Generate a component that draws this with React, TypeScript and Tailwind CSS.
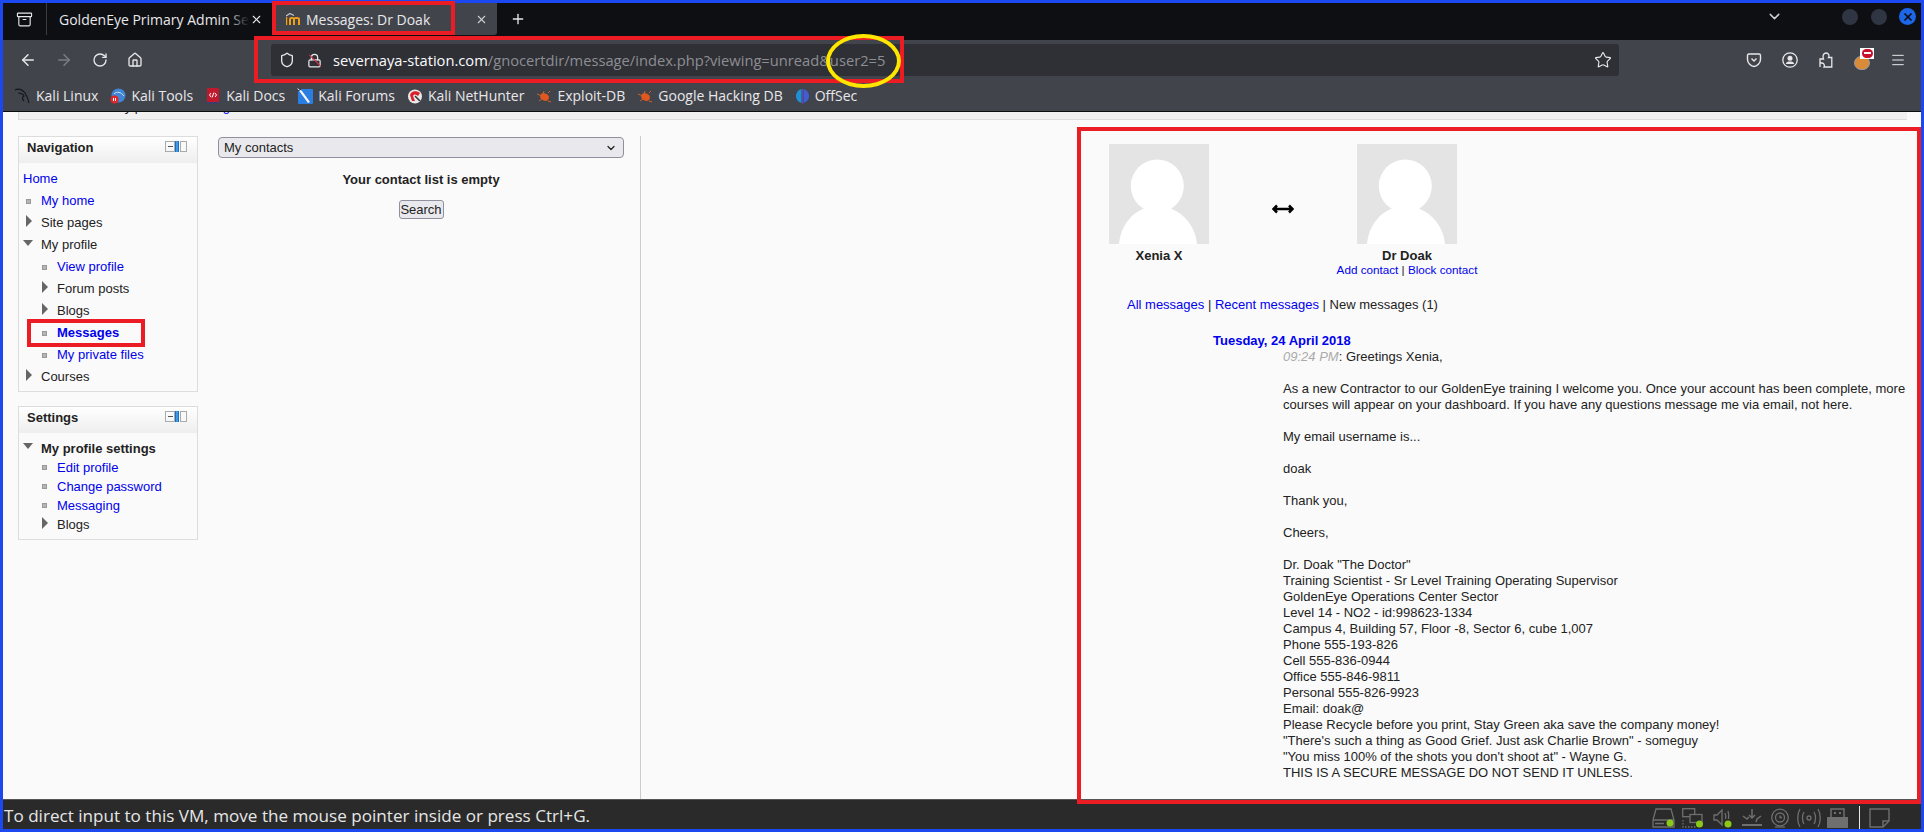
import type { ReactNode } from 'react';
import { ArrowLeft, ArrowRight, RotateCw, Home, Shield, Lock, Star, Plus, X, ChevronDown, Menu, Archive } from 'lucide-react';

const signature = [
    'Dr. Doak "The Doctor"',
    'Training Scientist - Sr Level Training Operating Supervisor',
    'GoldenEye Operations Center Sector',
    'Level 14 - NO2 - id:998623-1334',
    'Campus 4, Building 57, Floor -8, Sector 6, cube 1,007',
    'Phone 555-193-826',
    'Cell 555-836-0944',
    'Office 555-846-9811',
    'Personal 555-826-9923',
    'Email: doak@',
    'Please Recycle before you print, Stay Green aka save the company money!',
    '"There\'s such a thing as Good Grief. Just ask Charlie Brown" - someguy',
    '"You miss 100% of the shots you don\'t shoot at" - Wayne G.',
    'THIS IS A SECURE MESSAGE DO NOT SEND IT UNLESS.',
];

function BugIcon() {
    return (
        <svg width="16" height="16" viewBox="0 0 16 16">
            <ellipse cx="8.500" cy="9" rx="4.500" ry="3.500" fill="#e2571e" transform="rotate(25 8.500 9)" />
            <path d="M1 6L6 8M3 13L6 11M12 5L14 3M12 13L15 14M8 3L7 6" stroke="#c8642a" strokeWidth="1" />
        </svg>
    );
}

const bookmarks: { name: string; icon: ReactNode }[] = [
    {
        name: 'Kali Linux',
        icon: (
            <svg width="16" height="16" viewBox="0 0 16 16" fill="none" stroke="#15161a" strokeWidth="1.200">
                <path d="M0 2C4 0 8 2 10 5C12 8 13 10 14 15" />
                <path d="M3 5C6 5 8 6 9 8C7 9 7 11 9 13" />
            </svg>
        ),
    },
    {
        name: 'Kali Tools',
        icon: (
            <svg width="16" height="16" viewBox="0 0 16 16">
                <circle cx="8.500" cy="7.500" r="7" fill="#3f87d6" />
                <path d="M4 6C7 3 11 4 14 8" stroke="#cfe2f5" strokeWidth="1" fill="none" />
                <circle cx="4.500" cy="11.500" r="4" fill="#e0262b" />
                <path d="M3.500 10V13M5.500 10V13" stroke="#fff" strokeWidth="1" />
            </svg>
        ),
    },
    {
        name: 'Kali Docs',
        icon: (
            <svg width="16" height="16" viewBox="0 0 16 16">
                <rect x="2" y="0" width="12" height="16" rx="1" fill="#c2182b" />
                <rect x="2" y="14" width="12" height="2" fill="#3a3f6b" />
                <path d="M6 5L4.500 7L6 9M10 5L11.500 7L10 9M7 9.500L9 4.500" stroke="#fff" strokeWidth="1" fill="none" />
            </svg>
        ),
    },
    {
        name: 'Kali Forums',
        icon: (
            <svg width="16" height="16" viewBox="0 0 16 16">
                <rect x="1" y="1" width="15" height="15" rx="1" fill="#2a7de1" />
                <path d="M0 0L11 15L13 14L5 3Z" fill="#f4f4f4" />
                <path d="M1 3L4 1" stroke="#222" strokeWidth="1" />
            </svg>
        ),
    },
    {
        name: 'Kali NetHunter',
        icon: (
            <svg width="16" height="16" viewBox="0 0 16 16">
                <circle cx="8" cy="8.500" r="7" fill="#e8e8e8" />
                <path d="M3 7C4 3 9 2 13 5L11 8C9 6 7 6 6 8L8 13L5 13Z" fill="#d81f2a" />
                <path d="M8 8L13 13" stroke="#333" strokeWidth="1.500" />
            </svg>
        ),
    },
    { name: 'Exploit-DB', icon: <BugIcon /> },
    { name: 'Google Hacking DB', icon: <BugIcon /> },
    {
        name: 'OffSec',
        icon: (
            <svg width="15" height="16" viewBox="0 0 15 16">
                <path d="M6.500 1C3 2 1 5 1 8C1 11 3 14 6.500 15Z" fill="#1f8fd6" />
                <path d="M8.500 1C12 2 14 5 14 8C14 11 12 14 8.500 15Z" fill="#3f5fd0" />
                <rect x="7" y="1" width="1" height="15" fill="#6d3fc0" />
            </svg>
        ),
    },
];

function MoodleIcon() {
    return (
        <svg width="14" height="12" viewBox="0 0 14 12" fill="none" className="mr-[6px]">
            <path d="M4 12V6C4 4.500 8 4.500 8 6V12M8 6C8 4.500 13 4.500 13 6V12" stroke="#f29f18" strokeWidth="2" />
            <path d="M0.500 12V4" stroke="#f29f18" strokeWidth="1.500" />
            <path d="M0 3L4 0.500L8 2.500" stroke="#c8c8c8" strokeWidth="1.200" />
        </svg>
    );
}

function Avatar() {
    return (
        <svg width="100" height="100" viewBox="0 0 100 100" className="block">
            <rect width="100" height="100" fill="#e4e4e4" />
            <circle cx="48.300" cy="42" r="26.500" fill="#fff" />
            <path d="M10 100C12 78 28 62 48.300 62C68 62 86 78 88 100Z" fill="#fff" />
        </svg>
    );
}

function BlockControls() {
    return (
        <div className="flex items-stretch h-[11px] mt-[1px]">
            <span className="w-[10px] border border-[#aaa] flex items-center justify-center">
                <span className="w-[5px] h-px bg-[#555]" />
            </span>
            <span className="w-[4px] bg-[#3b9be8] border-x border-[#1d6fc0]" />
            <span className="w-[7px] ml-px border border-[#aaa] bg-[#f8f8f8]" />
        </div>
    );
}

function Block({ title, children, className }: { title: string; children: ReactNode; className?: string }) {
    return (
        <div className={`w-[180px] border border-[#ddd] ${className ?? ''}`}>
            <div className="h-[26px] pl-[8px] pr-[10px] pt-[3px] flex items-start justify-between bg-gradient-to-b from-white to-[#eeeeee] font-bold text-[13px] leading-[16px] text-[#222]">
                {title}
                <BlockControls />
            </div>
            {children}
        </div>
    );
}

function NavLeaf({ label, bold, compact }: { label: string; bold?: boolean; compact?: boolean }) {
    return (
        <div className={`flex items-center ${compact ? 'h-[19px]' : 'h-[22px]'}`}>
            <span className="w-[5px] h-[5px] bg-[#b5b5b5] border border-[#999] ml-[3px] mr-[10px]" />
            <a className={`text-[#0000ee] text-[13px] ${bold ? 'font-bold' : ''}`}>{label}</a>
        </div>
    );
}

function NavBranch({ label, open, bold, compact }: { label: string; open?: boolean; bold?: boolean; compact?: boolean }) {
    return (
        <div className={`flex items-center text-[13px] text-[#222] ${compact ? 'h-[19px]' : 'h-[22px]'} ${bold ? 'font-bold' : ''}`}>
            {open ? (
                <span className="w-[18px] -mt-[5px]">
                    <span className="block w-0 h-0 border-x-[5px] border-x-transparent border-t-[6px] border-t-[#666]" />
                </span>
            ) : (
                <span className="w-[18px] pl-[3px] -mt-[4px]">
                    <span className="block w-0 h-0 border-y-[6px] border-y-transparent border-l-[6px] border-l-[#666]" />
                </span>
            )}
            {label}
        </div>
    );
}

function StatusIcons() {
    return (
        <div className="flex items-center pr-[31px] pt-[3px] text-[#6f6f6f]">
            <svg width="23" height="20" viewBox="0 0 23 20" fill="none" stroke="currentColor" strokeWidth="1.300">
                <path d="M4 1H19L22 12V19H1V12Z" />
                <path d="M1 12H22M3 15.500H12" />
                <circle cx="18" cy="15" r="3.500" fill="#8bc919" stroke="none" />
            </svg>
            <svg width="21" height="20" viewBox="0 0 21 20" fill="none" stroke="currentColor" strokeWidth="1.300" className="ml-[7px]">
                <rect x="0.700" y="0.700" width="12" height="8" />
                <rect x="8" y="6.500" width="12" height="8" fill="#2a2a2a" />
                <path d="M1 12V19H14" strokeDasharray="1.500 1.500" />
                <circle cx="17.500" cy="16" r="3.500" fill="#8bc919" stroke="none" />
            </svg>
            <svg width="19" height="20" viewBox="0 0 19 20" fill="none" stroke="currentColor" strokeWidth="1.300" className="ml-[10px]">
                <path d="M1 7H4L9 2V17L4 12H1Z" />
                <path d="M12 5C13 7 13 9 12.500 11M15 3C16 6 16 8 15.500 11" />
                <circle cx="15" cy="16" r="3.500" fill="#8bc919" stroke="none" />
            </svg>
            <svg width="20" height="20" viewBox="0 0 20 20" fill="none" stroke="currentColor" strokeWidth="1.500" className="ml-[10px]">
                <path d="M10 1V10M7 7L10 10L13 7M1 8L5 11L7 9M19 8L15 11L14 14" />
                <path d="M0 17H20" strokeWidth="2" />
            </svg>
            <svg width="18" height="20" viewBox="0 0 18 20" fill="none" stroke="currentColor" strokeWidth="1.300" className="ml-[9px]">
                <circle cx="9" cy="9.500" r="8.300" />
                <circle cx="9" cy="9.500" r="4.500" />
                <path d="M9 7.500V9.500H11" />
                <path d="M4 19H14" />
            </svg>
            <svg width="24" height="20" viewBox="0 0 24 20" fill="none" stroke="currentColor" strokeWidth="1.300" className="ml-[8px]">
                <circle cx="12" cy="10" r="2" />
                <path d="M7 4C5 7 5 13 7 16M17 4C19 7 19 13 17 16M3 1C0 6 0 14 3 19M21 1C24 6 24 14 21 19" />
            </svg>
            <svg width="21" height="20" viewBox="0 0 21 20" className="ml-[6px]" fill="currentColor">
                <rect x="0" y="9" width="21" height="11" />
                <path d="M4 9V1H17V9" fill="none" stroke="currentColor" strokeWidth="1.500" />
                <rect x="7" y="4" width="2" height="2" />
                <rect x="12" y="4" width="2" height="2" />
            </svg>
            <span className="w-px h-[23px] bg-[#e8e8e8] ml-[11px]" />
            <svg width="21" height="20" viewBox="0 0 21 20" fill="none" stroke="currentColor" strokeWidth="1.400" className="ml-[9px]">
                <path d="M1 1H20V13L14 19H1Z" />
                <path d="M20 13H14V19" />
            </svg>
        </div>
    );
}

export default function App() {
    return (
        <div className="relative w-[1924px] h-[832px] flex flex-col border-[3px] border-[#1c48f0] font-['Liberation_Sans',sans-serif] bg-[#fafafa]">
            {/* tab strip */}
            <div className="h-[37px] shrink-0 bg-[#0d0f13] flex items-start text-[#e8e8ea] text-[14px] font-['Open_Sans',sans-serif]">
                <div className="w-[44px] h-[32px] flex items-center justify-center border-r border-[#3a3c42]">
                    <Archive size={17} strokeWidth={1.600} />
                </div>
                <div className="w-[228px] h-[32px] flex items-center pl-[12px] relative">
                    <span className="relative whitespace-nowrap">
                        GoldenEye Primary Admin Se
                        <span className="absolute right-0 top-0 bottom-0 w-[22px] bg-gradient-to-r from-transparent to-[#0d0f13]" />
                    </span>
                    <X size={13} className="absolute right-[12px]" />
                </div>
                <div className="w-[222px] h-[32px] rounded-b-[3px] bg-[#42444c] flex items-center pl-[11px] relative">
                    <MoodleIcon />
                    Messages: Dr Doak
                    <X size={13} className="absolute right-[9px] text-[#cfcfcf]" />
                </div>
                <div className="w-[42px] h-[32px] flex items-center justify-center">
                    <Plus size={16} />
                </div>
                <div className="flex-1 h-[27px] flex items-center justify-end pr-[5px]">
                    <ChevronDown size={17} className="text-[#d0d0d0] mr-[59px]" />
                    <span className="w-[16px] h-[16px] rounded-full bg-[#2f3542] mr-[13px]" />
                    <span className="w-[16px] h-[16px] rounded-full bg-[#2f3542] mr-[12px]" />
                    <span className="w-[17px] h-[17px] rounded-full bg-[#1e66e8] flex items-center justify-center">
                        <X size={12} strokeWidth={3.500} className="text-[#0d0f13]" />
                    </span>
                </div>
            </div>

            {/* nav toolbar */}
            <div className="h-[40px] shrink-0 bg-[#42444c] flex items-center text-[#e8e8ea]">
                <ArrowLeft size={18} className="ml-[16px]" />
                <ArrowRight size={18} className="ml-[18px] text-[#7c7d83]" />
                <RotateCw size={16} className="ml-[19px]" />
                <Home size={16} className="ml-[19px]" />
                <div className="ml-[128px] w-[1348px] h-[32px] rounded-[3px] bg-[#2f3035] flex items-center pl-[8px] relative">
                    <Shield size={16} />
                    <span className="relative ml-[12px] mr-[11px]">
                        <Lock size={15} className="block" />
                        <span className="absolute left-0 top-[7px] w-[16px] h-px bg-[#e0314b] rotate-45" />
                    </span>
                    <span className="text-[14.7px] font-['Open_Sans',sans-serif] text-[#fbfbfe]">severnaya-station.com</span>
                    <span className="text-[14.7px] font-['Open_Sans',sans-serif] text-[#8d8e93]">/gnocertdir/message/index.php?viewing=unread&amp;user2=5</span>
                    <Star size={18} strokeWidth={1.500} className="absolute right-[7px]" />
                </div>
                <svg width="16" height="16" viewBox="0 0 16 16" fill="none" stroke="currentColor" strokeWidth="1.400" className="ml-[127px]">
                    <path d="M3 2H13C14 2 14.500 2.500 14.500 3.500V7.500C14.500 11 11 14.500 8 14.500C5 14.500 1.500 11 1.500 7.500V3.500C1.500 2.500 2 2 3 2Z" />
                    <path d="M5.500 6.500L8 9L10.500 6.500" />
                </svg>
                <svg width="16" height="16" viewBox="0 0 16 16" fill="currentColor" className="ml-[20px]">
                    <circle cx="8" cy="8" r="7.200" fill="none" stroke="currentColor" strokeWidth="1.300" />
                    <circle cx="8" cy="6.300" r="2.500" />
                    <path d="M3.800 12C4 10 6 9.500 8 9.500C10 9.500 12 10 12.200 12Z" />
                </svg>
                <svg width="14" height="16" viewBox="0 0 14 16" fill="none" stroke="currentColor" strokeWidth="1.300" className="ml-[21px]">
                    <path d="M1 15V7H4.500C3.500 4.500 4 1 7 1C10 1 10.500 4 9.500 5.500H12.800V15H5C6 13.500 5 11 3 11H1" />
                </svg>
                <span className="relative ml-[21px] w-[16px] h-[14px] mt-[5px] rounded-full bg-[#d98b3a] border border-[#9a9a9a]">
                    <span className="absolute -top-[9px] left-[5px] w-[14px] h-[11px] bg-white flex items-center justify-center">
                        <span className="w-[11px] h-[9px] rounded-full bg-[#c8112b] flex items-center justify-center">
                            <span className="w-[7px] h-[2px] bg-white" />
                        </span>
                    </span>
                </span>
                <Menu size={16} strokeWidth={1.500} className="ml-[20px]" />
            </div>

            {/* bookmarks */}
            <div className="h-[32px] shrink-0 bg-[#42444c] border-b border-[#0c0c0d] flex items-center gap-[12px] pl-[12px] text-[14px] font-['Open_Sans',sans-serif] text-[#e8e8ea]">
                {bookmarks.map((b) => (
                    <div key={b.name} className="flex items-center gap-[5px]">
                        {b.icon}
                        {b.name}
                    </div>
                ))}
            </div>

            {/* page */}
            <div className="flex-1 min-h-0 flex flex-col text-[13px] leading-[16px] text-[#222]">
                <div className="h-[8px] shrink-0 ml-[15px] mr-[14px] overflow-hidden border-b border-l border-[#ddd] bg-[#f0f0f0] pl-[46px]">
                    <p className="-mt-[13px] whitespace-nowrap">Home ▸ My profile ▸ <a className="text-[#0000ee]">Messages</a></p>
                </div>
                <div className="flex-1 min-h-0 flex mt-[16px]">
                    <div className="w-[215px] pl-[15px] shrink-0">
                        <Block title="Navigation">
                            <div className="pl-[4px] pt-[5px] pb-[3px]">
                                <a className="block h-[22px] leading-[22px] text-[#0000ee]">Home</a>
                                <NavLeaf label="My home" />
                                <NavBranch label="Site pages" />
                                <NavBranch label="My profile" open />
                                <div className="pl-[16px]">
                                    <NavLeaf label="View profile" />
                                    <NavBranch label="Forum posts" />
                                    <NavBranch label="Blogs" />
                                    <NavLeaf label="Messages" bold />
                                    <NavLeaf label="My private files" />
                                </div>
                                <NavBranch label="Courses" />
                            </div>
                        </Block>
                        <Block title="Settings" className="mt-[14px]">
                            <div className="pl-[4px] pt-[6px] pb-[5px]">
                                <NavBranch label="My profile settings" open bold compact />
                                <div className="pl-[16px]">
                                    <NavLeaf label="Edit profile" compact />
                                    <NavLeaf label="Change password" compact />
                                    <NavLeaf label="Messaging" compact />
                                    <NavBranch label="Blogs" compact />
                                </div>
                            </div>
                        </Block>
                    </div>
                    <div className="w-[423px] shrink-0 border-r border-[#ccc] pr-[16px] flex flex-col items-center">
                        <div className="w-full h-[21px] mt-[1px] rounded-[4px] border border-[#8f8f9d] bg-[#e9e9ed] flex items-center justify-between pl-[5px] pr-[6px]">
                            My contacts
                            <ChevronDown size={12} strokeWidth={2.500} />
                        </div>
                        <p className="font-bold mt-[14px]">Your contact list is empty</p>
                        <button className="mt-[12px] h-[19px] w-[45px] rounded-[3px] border border-[#8f8f9d] bg-[#e9e9ed] leading-none">Search</button>
                    </div>
                    <div className="flex-1 pl-[468px] pt-[8px]">
                        <div className="flex">
                            <div className="w-[100px] text-center">
                                <Avatar />
                                <p className="font-bold mt-[4px]">Xenia X</p>
                            </div>
                            <div className="w-[148px] flex justify-center pt-[59px]">
                                <svg width="22" height="12" viewBox="0 0 22 12" fill="none" stroke="#000" strokeWidth="2.500">
                                    <path d="M2 6H20M5 2.500L1.500 6L5 9.500M17 2.500L20.500 6L17 9.500" />
                                </svg>
                            </div>
                            <div className="w-[100px] flex flex-col items-center">
                                <Avatar />
                                <p className="font-bold mt-[4px]">Dr Doak</p>
                                <p className="whitespace-nowrap text-[11.7px] leading-[14px] -mt-[1px]">
                                    <a className="text-[#0000ee]">Add contact</a> | <a className="text-[#0000ee]">Block contact</a>
                                </p>
                            </div>
                        </div>
                        <p className="mt-[20px] ml-[18px]">
                            <a className="text-[#0000ee]">All messages</a> | <a className="text-[#0000ee]">Recent messages</a> | New messages (1)
                        </p>
                        <p className="mt-[20px] ml-[104px] font-bold text-[#0000ee]">Tuesday, 24 April 2018</p>
                        <div className="ml-[174px] w-[630px]">
                            <p><i className="text-[#aaa]">09:24 PM</i>: Greetings Xenia,</p>
                            <p className="mt-[16px]">As a new Contractor to our GoldenEye training I welcome you. Once your account has been complete, more courses will appear on your dashboard. If you have any questions message me via email, not here.</p>
                            <p className="mt-[16px]">My email username is...</p>
                            <p className="mt-[16px]">doak</p>
                            <p className="mt-[16px]">Thank you,</p>
                            <p className="mt-[16px]">Cheers,</p>
                            <div className="mt-[16px]">
                                {signature.map((line) => (
                                    <p key={line}>{line}</p>
                                ))}
                            </div>
                        </div>
                    </div>
                </div>
            </div>

            {/* status bar */}
            <div className="h-[30px] shrink-0 bg-[#2a2a2a] border-t border-[#555] flex items-center justify-between pl-px pt-[3px] text-[#e6e6e6] text-[17.100px] font-['Open_Sans',sans-serif]">
                To direct input to this VM, move the mouse pointer inside or press Ctrl+G.
                <StatusIcons />
            </div>

            {/* annotations drawn over the screenshot */}
            <div className="absolute left-[269px] -top-[2px] w-[183px] h-[34px] border-[4px] border-[#ec1c24]" />
            <div className="absolute left-[251px] top-[33px] w-[650px] h-[47px] border-[4px] border-[#ec1c24]" />
            <div className="absolute left-[823px] top-[31px] w-[75px] h-[54px] rounded-[50%] border-[4px] border-[#ffe600]" />
            <div className="absolute left-[24px] top-[316px] w-[118px] h-[28px] border-[4px] border-[#ec1c24]" />
            <div className="absolute left-[1074px] top-[124px] w-[844px] h-[677px] border-[4px] border-[#ec1c24]" />
        </div>
    );
}
